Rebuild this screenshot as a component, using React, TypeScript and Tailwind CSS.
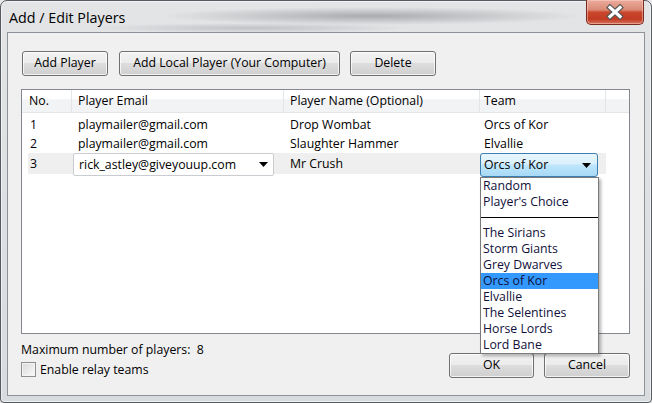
import React from 'react';

const players = [
  { no: 1, email: 'playmailer@gmail.com', name: 'Drop Wombat', team: 'Orcs of Kor' },
  { no: 2, email: 'playmailer@gmail.com', name: 'Slaughter Hammer', team: 'Elvallie' },
];

const specialTeams = ['Random', "Player's Choice"];
const teams = ['The Sirians', 'Storm Giants', 'Grey Dwarves', 'Orcs of Kor', 'Elvallie', 'The Selentines', 'Horse Lords', 'Lord Bane'];

const btn =
  'h-[25px] rounded-[3px] border border-[#707070] bg-[linear-gradient(to_bottom,#f2f2f2_0%,#ebebeb_50%,#dddddd_50%,#cfcfcf_100%)] shadow-[inset_0_0_0_1px_rgba(255,255,255,0.75)] flex items-center justify-center text-[12.3px] text-black';

const Arrow = () => (
  <svg width="9" height="5" viewBox="0 0 9 5">
    <polygon points="0,0 9,0 4.5,5" fill="#000" />
  </svg>
);

const CloseButton = () => (
  <div className="-mt-[1px] w-[58px] h-[25px] rounded-b-[5px] border border-[#7a2a1e] border-t-0 bg-[linear-gradient(to_bottom,#ebab9c_0%,#dc8b77_40%,#c9452c_52%,#c23c24_80%,#d8735d_100%)] shadow-[inset_0_0_0_1px_rgba(255,220,210,0.45)] flex items-center justify-center">
    <svg width="20" height="16" viewBox="0 0 20 16">
      <path d="M5 3.5 L15 12.5 M15 3.5 L5 12.5" stroke="#555" strokeWidth="5.5" strokeLinecap="square" />
      <path d="M5 3.5 L15 12.5 M15 3.5 L5 12.5" stroke="#ffffff" strokeWidth="3.2" strokeLinecap="square" />
    </svg>
  </div>
);

export default function App() {
  return (
    <div className="w-[652px] h-[403px] bg-[#e9e9e9] font-['Open_Sans',sans-serif] text-black">
      <div className="w-full h-full rounded-t-[7px] rounded-b-[4px] border border-[#565b61] flex flex-col bg-[radial-gradient(ellipse_210px_9px_at_370px_15px,#a9abae,transparent),radial-gradient(ellipse_160px_5px_at_250px_27px,#c0c2c5,transparent),linear-gradient(to_bottom,#e2e4e6,#d9dcdf)] shadow-[inset_0_0_0_1px_rgba(255,255,255,0.55)]">
        {/* title bar */}
        <div className="h-[31px] flex justify-between pl-[8px] pr-[7px]">
          <div className="pt-[7px] text-[14.3px] leading-[20px] text-black">Add / Edit Players</div>
          <CloseButton />
        </div>

        {/* client area */}
        <div className="flex-1 mx-[6px] mb-[6px] border border-[#8d9298] bg-[#f0f0f0] pl-[13px] pr-[14px] flex flex-col text-[12.3px]">
          <div className="pt-[18px] flex gap-[11px] pl-[1px]">
            <button className={`${btn} w-[86px]`}>Add Player</button>
            <button className={`${btn} w-[221px]`}>Add Local Player (Your Computer)</button>
            <button className={`${btn} w-[86px] ml-[-1px]`}>Delete</button>
          </div>

          {/* player table */}
          <div className="mt-[13px] h-[245px] border border-[#828790] bg-white">
            <div className="h-[23px] flex border-b border-[#e5e5e5] bg-[linear-gradient(to_bottom,#ffffff_0%,#ffffff_40%,#f2f3f5_45%,#f2f3f5_100%)] leading-[22px]">
              <div className="w-[50px] pl-[7px] border-r border-[#e3e5e8]">No.</div>
              <div className="w-[212px] pl-[6px] border-r border-[#e3e5e8]">Player Email</div>
              <div className="w-[196px] pl-[6px] border-r border-[#e3e5e8]">Player Name (Optional)</div>
              <div className="w-[126px] pl-[4px] border-r border-[#e3e5e8]">Team</div>
              <div className="flex-1" />
            </div>

            <div className="pt-[2px]">
              {players.map((p) => (
                <div key={p.no} className="ml-[6px] w-[578px] h-[19px] flex leading-[20px]">
                  <div className="w-[44px] pl-[2px]">{p.no}</div>
                  <div className="w-[212px] pl-[6px]">{p.email}</div>
                  <div className="w-[196px] pl-[6px]">{p.name}</div>
                  <div className="w-[126px] pl-[4px]">{p.team}</div>
                </div>
              ))}

              {/* row being edited */}
              <div className="ml-[6px] w-[578px] h-[21px] flex leading-[22px] bg-[#efefef]">
                <div className="w-[44px] pl-[2px]">3</div>
                <div className="w-[212px] pl-[1px]">
                  <div className="w-[201px] h-[23px] rounded-[2px] border border-[#c9ccd1] bg-white flex items-center justify-between pl-[5px] pr-[5px] leading-[21px]">
                    <span>rick_astley@giveyouup.com</span>
                    <Arrow />
                  </div>
                </div>
                <div className="w-[196px] pl-[6px]">Mr Crush</div>
                <div className="w-[126px] relative">
                  <div className="w-[118px] h-[24px] rounded-[3px] border border-[#3c7fb1] bg-[linear-gradient(to_bottom,#eaf6fd_0%,#d9f0fc_45%,#bee6fd_50%,#a7d9f5_100%)] flex items-center justify-between pl-[3px] pr-[6px] leading-[22px]">
                    <span>Orcs of Kor</span>
                    <Arrow />
                  </div>
                  <div className="absolute z-20 top-[24px] left-0 w-[119px] border border-[#7a7a7a] bg-white shadow-[2px_2px_3px_rgba(0,0,0,0.3)] text-[#10103a] leading-[16px]">
                    {specialTeams.map((t) => (
                      <div key={t} className="h-[16px] pl-[2px]">{t}</div>
                    ))}
                    <div className="h-[15px] pt-[7px]">
                      <div className="h-px bg-black" />
                    </div>
                    {teams.map((t, i) => (
                      <div key={t} className={`h-[16px] pl-[2px] ${i === 3 ? 'bg-[#3399ff]' : ''}`}>{t}</div>
                    ))}
                  </div>
                </div>
              </div>
            </div>
          </div>

          {/* footer */}
          <div className="flex justify-between items-start">
            <div className="pt-[7px]">
              <div className="leading-[17px] whitespace-pre">Maximum number of players:  8</div>
              <div className="mt-[4px] h-[15px] flex items-center gap-[4px]">
                <div className="w-[15px] h-[15px] border border-[#8e8f8f] bg-[linear-gradient(135deg,#d8d8d8,#fbfbfb)] shadow-[inset_0_0_0_1px_#f4f4f4]" />
                <span className="leading-[16px]">Enable relay teams</span>
              </div>
            </div>
            <div className="mt-[19px] flex gap-[10px]">
              <button className={`${btn} w-[85px]`}>OK</button>
              <button className={`${btn} w-[86px]`}>Cancel</button>
            </div>
          </div>
        </div>
      </div>
    </div>
  );
}
